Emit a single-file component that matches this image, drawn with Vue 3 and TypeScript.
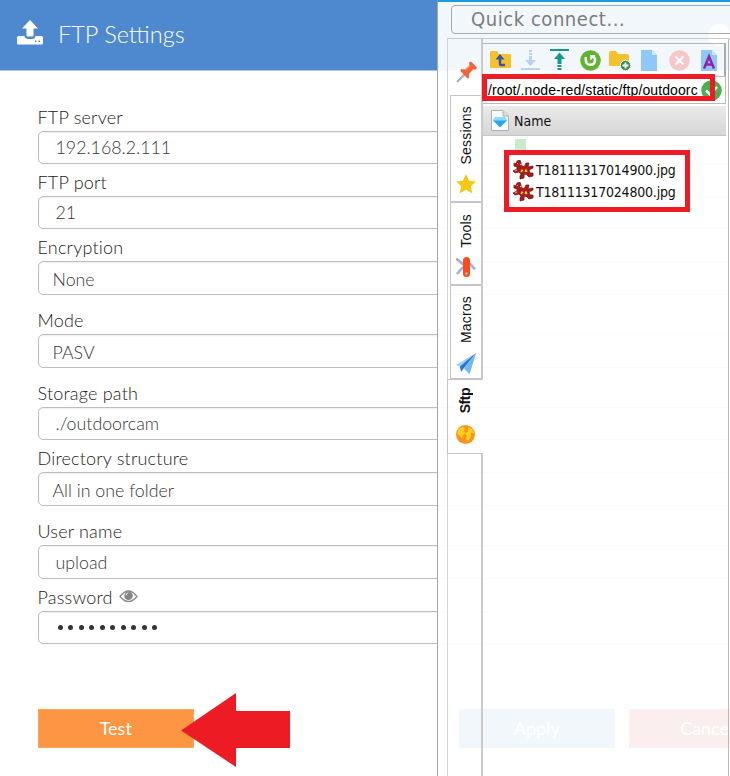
<script setup lang="ts">
interface Field {
  label: string
  value: string
  kind: 'text' | 'select' | 'password'
}

const fields: Field[] = [
  { label: 'FTP server', value: '192.168.2.111', kind: 'text' },
  { label: 'FTP port', value: '21', kind: 'text' },
  { label: 'Encryption', value: 'None', kind: 'select' },
  { label: 'Mode', value: 'PASV', kind: 'select' },
  { label: 'Storage path', value: './outdoorcam', kind: 'text' },
  { label: 'Directory structure', value: 'All in one folder', kind: 'select' },
  { label: 'User name', value: 'upload', kind: 'text' },
  { label: 'Password', value: '', kind: 'password' },
]

const files: string[] = ['T18111317014900.jpg', 'T18111317024800.jpg']
</script>

<template>
  <div class="screen">
    <header class="bar">
      <svg class="upload" width="26" height="26" viewBox="0 0 26 26">
        <path fill="#fff" d="M13 0 L21 8.500 H16.500 V15 Q16.500 16.500 15 16.500 H11 Q9.500 16.500 9.500 15 V8.500 H5 Z" />
        <path fill="#fff" d="M1.500 16 H7.500 Q8 19 11 19 H15 Q18 19 18.500 16 H24.500 Q26 16 26 17.500 V23 Q26 24.500 24.500 24.500 H1.500 Q0 24.500 0 23 V17.500 Q0 16 1.500 16 Z" />
        <path fill="#4e89cf" d="M18 20.500h1.500v1.500h-1.500z M21.500 20.500h1.500v1.500h-1.500z" />
      </svg>
      <h1>FTP Settings</h1>
      <span class="help">?</span>
    </header>

    <main class="form">
      <div v-for="f in fields" :key="f.label" class="field" :class="f.kind">
        <label>
          <span>{{ f.label }}</span>
          <svg v-if="f.kind === 'password'" width="19" height="13" viewBox="0 0 19 13">
            <path d="M1 6.500 Q9.500 -4.500 18 6.500 Q9.500 16.500 1 6.500 Z" fill="none" stroke="#8a8a8a" stroke-width="1.300" />
            <circle cx="9.500" cy="5.700" r="4.300" fill="#858585" />
            <path d="M7 5.500 Q7.200 3.200 9.300 3" fill="none" stroke="#eee" stroke-width="1" />
          </svg>
        </label>
        <div class="box">
          <span v-if="f.kind !== 'password'">{{ f.value }}</span>
          <span v-else class="dots"><i v-for="n in 10" :key="n" /></span>
        </div>
      </div>
      <div class="actions">
        <button class="test">Test</button>
        <button class="apply">Apply</button>
        <button class="cancel">Cancel</button>
      </div>
    </main>

    <svg class="arrow" width="110" height="76" viewBox="0 0 110 76">
      <path fill="#ed1c24" d="M0 37.500 L55 0 V18 H109 V55 H55 V74 Z" />
    </svg>

    <aside class="client">
      <div class="quick">Quick connect...</div>
      <div class="body">
        <nav class="tabs">
          <div class="pin">
            <svg width="22" height="22" viewBox="0 0 22 22">
              <path d="M1 21 L9 13" stroke="#a3afbc" stroke-width="2.200" />
              <path fill="#f4623a" d="M5 8 L9 8.500 L13.500 5 L13 1.500 L15 .5 L21 6.500 L20 8.500 L17 8.500 L13 13 L13 17 L11.500 17.500 L4.500 10 Z" />
              <path d="M9 9 L14 4.500" stroke="#ff9a72" stroke-width="1.500" />
            </svg>
          </div>
          <div class="tab sessions">
            <span>Sessions</span>
            <svg width="20" height="20" viewBox="0 0 20 20"><path fill="#f6c516" d="M10 0 L13 6.700 L20 7.400 L14.800 12.200 L16.400 19.500 L10 15.800 L3.600 19.500 L5.200 12.200 L0 7.400 L7 6.700 Z" /></svg>
          </div>
          <div class="tab tools">
            <span>Tools</span>
            <svg width="20" height="21" viewBox="0 0 20 21">
              <path d="M0 1.500 L8 8 M1 17 L7 10 M10 2 L19 12.500" stroke="#a4add8" stroke-width="2.600" />
              <rect x="7" y="0" width="7" height="20" rx="3.500" fill="#fa4b1c" />
              <circle cx="10.500" cy="16.500" r="1.200" fill="#ffc0a5" />
            </svg>
          </div>
          <div class="tab macros">
            <span>Macros</span>
            <svg width="20" height="21" viewBox="0 0 20 21">
              <path fill="#9dcef7" d="M20 0 L0 12 L5 14 Z M20 0 L13.500 21 L8 16 Z" />
              <path fill="#2378cd" d="M20 0 L4 13.500 L5 19 L8 15 Z" />
              <path fill="#78b7ee" d="M20 0 L8 15 L13.500 21 Z" />
            </svg>
          </div>
          <div class="tab sftp">
            <span>Sftp</span>
            <svg width="19" height="19" viewBox="0 0 19 19">
              <circle cx="9.500" cy="9.500" r="9.500" fill="#f9931e" />
              <path fill="#ffd21f" d="M2 5 L6 2 L9 3 L8 6 L10 8 L7 10 L6 14 L3 10 L1 9 Z M12 2 L16 4 L18 8 L15 8 L15 12 L12 16 L10 14 L11 11 L9.500 9 L12 6 Z" />
            </svg>
          </div>
          <div class="rest" />
        </nav>

        <section class="browser">
          <div class="toolbar">
            <svg width="22" height="20" viewBox="0 0 22 20">
              <path fill="#f4c22f" d="M0 3 Q0 1 2 1 H7 L9 4 H20 Q21 4 21 5 V17 Q21 18 20 18 H1 Q0 18 0 17 Z" />
              <path d="M15 15 H11 Q10 15 10 14 V8" stroke="#3f51a8" stroke-width="2.500" fill="none" /><path fill="#3f51a8" d="M10 4 L14.500 9.500 H5.500 Z" />
            </svg>
            <svg width="20" height="20" viewBox="0 0 20 20">
              <path fill="#b9d2f0" d="M0 18 H19 V20 H0 Z M8 0 H11 V2 H8 Z M8 3 H11 V5 H8 Z M8 6 H11 V10 H15 L9.500 16 L4 10 H8 Z" />
            </svg>
            <svg width="20" height="22" viewBox="0 0 20 22">
              <path fill="#129b8d" d="M0 0 H19 V2 H0 Z M9.500 3.500 L15 10 H11.500 V15 H7.500 V10 H4 Z M7.500 16 H11.500 V18 H7.500 Z M7.500 19 H11.500 V21 H7.500 Z" />
            </svg>
            <svg width="21" height="21" viewBox="0 0 21 21">
              <circle cx="10.500" cy="10.500" r="10.300" fill="#62b22f" /><path d="M5.800 7 V10 Q6 14.800 10.500 14.800 Q15 14.800 15 10 Q15 8 13.500 6.500" fill="none" stroke="#fff" stroke-width="2.500" /><path fill="#fff" d="M10 5 H15.500 L10.500 10.500 Z" />
            </svg>
            <svg width="22" height="21" viewBox="0 0 22 21">
              <path fill="#f4c22f" d="M0 3 Q0 1 2 1 H7 L9 4 H18 Q20 4 20 6 V16 H1 Q0 16 0 15 Z" /><circle cx="16.500" cy="15.500" r="5.200" fill="#3b8d4c" stroke="#f2f6fb" /><path d="M13.500 15.500 H19.500 M16.500 12.500 V18.500" stroke="#fff" stroke-width="1.800" />
            </svg>
            <svg width="17" height="21" viewBox="0 0 17 21"><path fill="#8fc8f8" d="M0 0 H11 L16 5 V21 H0 Z" /><path fill="#d1e9fd" d="M11 0 V5 H16 Z" /></svg>
            <svg width="21" height="21" viewBox="0 0 21 21"><circle cx="10.500" cy="10.500" r="10.300" fill="#f5c7c9" /><path d="M6.500 6.500 L14.500 14.500 M14.500 6.500 L6.500 14.500" stroke="#fff" stroke-width="2.300" /></svg>
            <svg width="17" height="21" viewBox="0 0 17 21"><path fill="#8fc8f8" d="M0 0 H11 L16 5 V21 H0 Z" /><path fill="#d1e9fd" d="M11 0 V5 H16 Z" /><path d="M3 18.500 L8 6.500 L13 18.500 M5 14.500 H11" stroke="#9223a6" stroke-width="2.500" fill="none" /></svg>
          </div>
          <div class="path">
            <span>/root/.node-red/static/ftp/outdoorc</span>
            <svg width="21" height="21" viewBox="0 0 21 21"><circle cx="10.500" cy="10.500" r="10.300" fill="#4aaf50" /><path d="M5 10.500 L9 14.500 L16 7" stroke="#fff" stroke-width="2.500" fill="none" /></svg>
          </div>
          <div class="columns">
            <svg width="18" height="21" viewBox="0 0 18 21">
              <path d="M.5 .5 H12 L17.500 6 V20.500 H.5 Z" fill="#f8fafc" stroke="#a8b0b8" /><path d="M12 .5 V6 H17.500" fill="#ddd" stroke="#a8b0b8" />
              <path d="M4.500 7 H13.500 L16 10.500 L9 17.500 L2 10.500 Z" fill="#2ea4ec" /><path d="M4.500 7 H13.500 L16 10.500 H2 Z" fill="#8bdcff" />
            </svg>
            <span>Name</span>
          </div>
          <div class="listing">
            <div class="parent"><i /></div>
            <div v-for="name in files" :key="name" class="file">
              <svg width="21" height="20" viewBox="0 0 21 20">
                <path fill="#b01a18" stroke="#5c1512" stroke-width=".7" d="M1 3 L3 4 L4 1 L7 0 L8 3 L8 5 L11 7 L13 3 L16 3 L15 7 L20 6 L20 8 L16 10 L17 13 L20 13 L20 16 L16 17 L13 14 L11 15 L11 18 L7 19 L7 16 L8 14 L6 12 L2 13 L0 11 L4 9 L4 7 L1 6 Z" />
                <path d="M8 12 L9 10 L10 11 M12 12 L13 10 L14 12" stroke="#ffdb42" stroke-width="1.300" fill="none" />
                <path d="M4 4 L5 3 M7 4 L8 5 M2 11 L4 10" stroke="#f2b0a0" />
              </svg>
              <span>{{ name }}</span>
            </div>
          </div>
        </section>
      </div>
    </aside>

    <div class="mark path-mark" />
    <div class="mark file-mark" />
  </div>
</template>

<style>
body { background: #fff; overflow: hidden; }
</style>

<style scoped>
* { box-sizing: border-box; }
svg { display: block; flex: none; }
.screen { position: relative; width: 730px; height: 776px; overflow: hidden; background: #fff; font-family: Lato, sans-serif; font-weight: 300; }
.bar { display: flex; align-items: center; height: 71px; padding: 0 0 1px 17px; background: #4e89cf; border-bottom: 1px solid #a9c4e4; color: #fff; }
.upload { margin-top: -4px; }
h1 { flex: 1; margin: -1px 0 0 15px; font-size: 23.500px; font-weight: 300; line-height: 30px; }
.help { width: 22px; height: 22px; border-radius: 50%; background: #fff; color: #4e89cf; text-align: center; line-height: 22px; }
.form { padding: 32.500px 0 0 37.500px; }
.field { width: 740px; margin-bottom: 5px; }
.field.select { margin-bottom: 12px; }
label { display: flex; align-items: center; gap: 6px; height: 27px; padding-bottom: 1px; font-size: 18px; letter-spacing: .2px; line-height: 26px; color: #222; }
.box { display: flex; align-items: center; height: 33.3px; padding: 0 0 1px 17px; border: 1.500px solid #bdbdbd; border-radius: 5px; font-size: 17.800px; color: #383838; box-shadow: inset 0 1px 2px #eee; }
.select .box { height: 34px; padding: 1px 0 0 14px; }
.dots { display: flex; gap: 5.500px; padding-left: 2px; padding-top: 2px; }
.dots i { width: 5px; height: 5px; border-radius: 50%; background: #333; }
.actions { display: flex; gap: 13.500px; width: 760px; margin-top: 65px; }
button { flex: none; width: 156.500px; height: 39px; padding: 0 0 1px; border: 0; color: #fff; font: 400 18px Lato, sans-serif; }
.test { background: #fd9643; border: 1px solid #fba65f; }
.apply { margin-left: 251px; background: #4e89cf; }
.cancel { background: #b01818; }
.arrow { position: absolute; left: 181px; top: 693px; }

.client { position: absolute; left: 437px; top: 0; width: 293px; height: 776px; padding: 3px 0 0 9px; border-left: 1px solid #a5a5a5; border-top: 2px solid #1a9cd8; background: rgba(255, 255, 255, .93); }
.quick { width: 300px; height: 29px; margin-left: 4px; padding-left: 19px; border: 1px solid #aaa; border-radius: 4px; color: #7c7c7c; font: 400 20px/27px "DejaVu Sans Condensed", "DejaVu Sans", sans-serif; font-stretch: condensed; letter-spacing: .55px; }
.body { display: flex; width: 282px; height: 742px; margin-top: 4px; border-top: 1px solid #c9c9c9; border-right: 1px solid #bbb; }
.tabs { display: flex; flex-direction: column; width: 36px; border-left: 1px solid #d5d5d5; }
.pin { height: 56px; padding: 22px 0 0 8px; border-right: 2px solid #cacaca; }
.tab { display: flex; flex-direction: column; align-items: center; justify-content: space-between; margin-left: 2px; border: 1px solid #c5c5c5; border-right: 2px solid #cacaca; color: #111; font: 400 14px/17px "Liberation Sans", sans-serif; letter-spacing: .2px; }
.tab span { writing-mode: vertical-rl; transform: rotate(180deg); }
.sessions { height: 107px; padding: 10px 0 7px; }
.tools { height: 83px; padding: 11px 0 6px; }
.macros { height: 94px; padding: 10px 0 4px; }
.sftp { height: 75px; margin-left: -1px; padding: 8px 0 9px; border-right: 0; font-weight: 700; letter-spacing: -.5px; }
.rest { flex: 1; border-right: 2px solid #cacaca; }
.browser { width: 243px; padding-top: 4px; }
.toolbar { display: grid; grid-template-columns: repeat(8, 29.800px); align-items: center; justify-items: center; height: 33px; padding-left: 3px; border-top: 1px solid #b5b5b5; border-right: 2px solid #aaa; }
.path { display: flex; align-items: center; justify-content: space-between; height: 28px; padding: 0 3px 0 5px; border: 1px solid #bbb; border-left: 0; background: #fff; color: #000; font: 400 14px "Liberation Sans", sans-serif; letter-spacing: .1px; white-space: nowrap; }
.columns { display: flex; align-items: center; gap: 5px; height: 30px; margin-top: 2px; padding-left: 8px; border-bottom: 1px solid #c4c4c4; background: linear-gradient(#ebebeb, #d6d6d6); color: #111; font: 400 14px "DejaVu Sans Condensed", "DejaVu Sans", sans-serif; font-stretch: condensed; }
.parent { height: 23px; padding: 3px 0 0 32px; }
.parent i { display: block; width: 11px; height: 13px; background: #c8ebcb; }
.file { display: flex; align-items: center; gap: 2px; height: 22px; padding-left: 30px; color: #111; font: 400 14px "DejaVu Sans Condensed", "DejaVu Sans", sans-serif; font-stretch: condensed; letter-spacing: -.2px; white-space: nowrap; }
.mark { position: absolute; border: 5px solid #ed1c24; }
.path-mark { left: 482px; top: 74px; width: 233px; height: 27px; }
.file-mark { left: 504px; top: 150px; width: 186px; height: 62px; }
</style>
